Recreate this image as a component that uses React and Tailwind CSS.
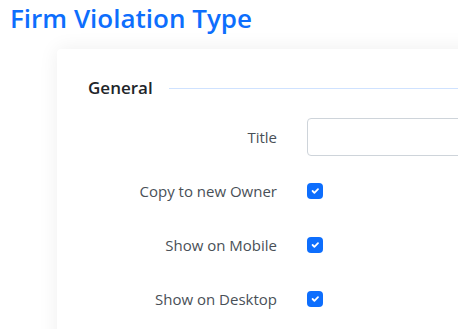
import React from "react";

function Check() {
  return (
    <div className="w-4 h-4 rounded-[4px] bg-[#0d6efd] flex items-center justify-center">
      <svg width="12" height="12" viewBox="0 0 20 20" fill="none">
        <path d="M6 10l3 3 6-6" stroke="#fff" strokeWidth="3" strokeLinecap="round" strokeLinejoin="round" />
      </svg>
    </div>
  );
}

function Row({ label, children }) {
  return (
    <div className="flex items-center h-[54px]">
      <div className="w-[250px] pr-[30px] text-right text-[15px] text-[#495057]">{label}</div>
      <div className="flex-1">{children}</div>
    </div>
  );
}

export default function App() {
  return (
    <div className="w-[458px] h-[329px] overflow-hidden bg-white" style={{ fontFamily: '"Open Sans", "Liberation Sans", sans-serif' }}>
      <h1 className="pl-[10px] pt-[1px] text-[26px] leading-[34px] font-semibold text-[#0d6efd]">Firm Violation Type</h1>
      <div className="ml-[57px] mt-[14px] w-[500px] h-[400px] bg-white rounded-[4px] shadow-[0_0_20px_rgba(0,0,0,0.07)]">
        <div className="pl-[31px] pt-[28px] flex items-center">
          <div className="text-[17px] font-semibold text-[#212529] leading-[22px]">General</div>
          <div className="ml-[16px] flex-1 h-px bg-[#cfe2ff]"></div>
        </div>
        <div className="mt-[11px]">
          <Row label="Title">
            <div className="h-[38px] border border-[#ced4da] rounded-[4px] bg-white"></div>
          </Row>
          <Row label="Copy to new Owner"><Check /></Row>
          <Row label="Show on Mobile"><Check /></Row>
          <Row label="Show on Desktop"><Check /></Row>
        </div>
      </div>
    </div>
  );
}
